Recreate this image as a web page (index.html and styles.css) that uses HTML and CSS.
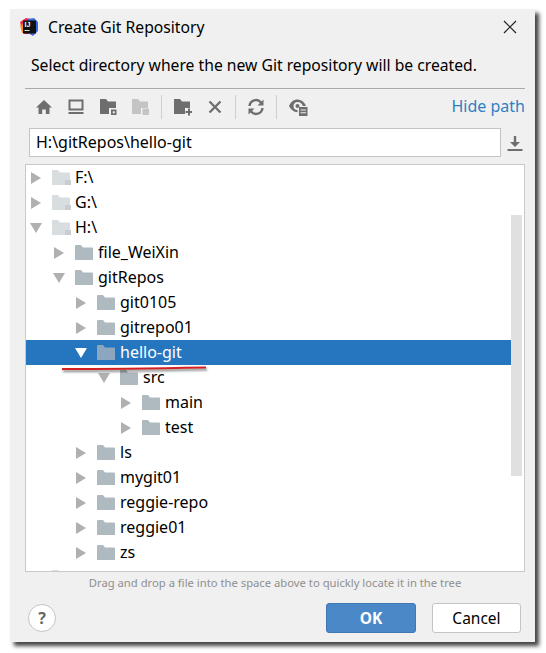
FILE: index.html
```html
<!DOCTYPE html>
<html lang="en">
<head>
<meta charset="utf-8">
<title>Create Git Repository</title>
<link rel="stylesheet" href="styles.css">
</head>
<body>
<svg width="0" height="0" class="defs">
  <defs>
    <symbol id="folder" viewBox="0 0 18 15"><path d="M0 1a1 1 0 0 1 1-1h5l2 2.500h9a1 1 0 0 1 1 1V15H0z"/></symbol>
  </defs>
</svg>
<main class="dialog">
  <header class="titlebar">
    <svg class="logo" width="20" height="20" viewBox="0 0 20 20">
      <path d="M1 5l6-4 5 1-2 15-5 0-2-5z" fill="#f2274f"/>
      <path d="M1 8l4-1 1 8-3 1z" fill="#f68b1f"/>
      <path d="M9 2l6-1 4 4 0 9-5 5-5-3z" fill="#3c6be0"/>
      <rect x="4" y="3.500" width="13" height="13" fill="#111"/>
      <text x="5.500" y="10" class="logo-text">IJ</text>
      <rect x="5.500" y="13" width="5" height="1" fill="#ddd"/>
    </svg>
    <span class="title">Create Git Repository</span>
    <svg class="close" width="14" height="14" viewBox="0 0 14 14"><path d="M1 1l12 12M13 1L1 13" stroke="#222" stroke-width="1.200" fill="none"/></svg>
  </header>
  <p class="prompt">Select directory where the new Git repository will be created.</p>
  <div class="panel">
    <div class="toolbar">
      <span class="tool"><svg width="18" height="18" viewBox="0 0 18 18"><path d="M9 2L1 9.500h2.500V16h3.700v-4.500h3.600V16h3.700V9.500H17z" fill="#6e6e6e"/></svg></span>
      <span class="tool"><svg width="18" height="18" viewBox="0 0 18 18"><path d="M2.500 2.500h13v9h-13z" fill="none" stroke="#6e6e6e" stroke-width="2"/><rect x="1.500" y="14" width="15" height="2" fill="#6e6e6e"/></svg></span>
      <span class="tool"><svg width="18" height="18" viewBox="0 0 18 18"><path d="M1 1h6l2 2.500h8V10h-7v6H1z" fill="#6e6e6e"/><path d="M12 11.500h5.500V17H12z" fill="#6e6e6e"/><rect x="13.800" y="13.300" width="2" height="2" fill="#f0f0f0"/></svg></span>
      <span class="tool"><svg width="18" height="18" viewBox="0 0 18 18"><path d="M1 1h6l2 2.500h8V10h-7v6H1z" fill="#c4c4c4"/><path d="M11.500 10.500H18V17h-6.500z" fill="#c4c4c4"/></svg></span>
      <span class="sep sep-wide"></span>
      <span class="tool"><svg width="18" height="18" viewBox="0 0 18 18"><path d="M0 1h6l2 2.500h8V10h-5v6H0z" fill="#6e6e6e"/><path d="M14 10.500h2V13h2.500v2H16v2.500h-2V15h-2.500v-2H14z" fill="#6e6e6e"/></svg></span>
      <span class="tool"><svg width="18" height="18" viewBox="0 0 18 18"><path d="M3.500 3.500l11 11M14.500 3.500l-11 11" stroke="#6e6e6e" stroke-width="2.300" fill="none"/></svg></span>
      <span class="sep"></span>
      <span class="tool"><svg width="18" height="18" viewBox="0 0 18 18"><path d="M2.500 8A6.500 6.500 0 0 1 14 4.500" fill="none" stroke="#6e6e6e" stroke-width="2.400"/><path d="M16.500 1.500V7.500H10.500z" fill="#6e6e6e"/><path d="M15.500 10A6.500 6.500 0 0 1 4 13.500" fill="none" stroke="#6e6e6e" stroke-width="2.400"/><path d="M1.500 16.500V10.500H7.500z" fill="#6e6e6e"/></svg></span>
      <span class="sep"></span>
      <span class="tool tool-after"><svg width="19" height="18" viewBox="0 0 19 18"><path d="M0 8C2 3.500 5 1.500 8.500 1.500S15 3.500 17 7.500L16 8h-2.200C13 5.500 11 4 8.500 4A4.300 4.300 0 0 0 4.500 8a4 4 0 0 0 4 4v2.200C4.500 14 2 11.500 0 8z" fill="#6e6e6e"/><circle cx="8.500" cy="8" r="2" fill="#6e6e6e"/><rect x="10" y="9" width="8.500" height="9" fill="#6e6e6e"/><path d="M11.500 12h5.500M11.500 14.800h5.500" stroke="#f0f0f0" stroke-width="1.100"/></svg></span>
      <a class="hide-path">Hide path</a>
    </div>
    <div class="path-row">
      <div class="path-field">H:\gitRepos\hello-git</div>
      <svg class="download" width="18" height="18" viewBox="0 0 18 18"><path d="M7.800 2h2.400v6H14l-5 5-5-5h3.800z" fill="#6e6e6e"/><rect x="1.500" y="15" width="15" height="2" fill="#6e6e6e"/></svg>
    </div>
    <div class="tree">
      <div class="row l0"><i class="arrow right"></i><svg class="folder drive"><use href="#folder"/></svg><span class="lock"></span><span class="label">F:\</span></div>
      <div class="row l0"><i class="arrow right"></i><svg class="folder drive"><use href="#folder"/></svg><span class="lock"></span><span class="label">G:\</span></div>
      <div class="row l0"><i class="arrow down"></i><svg class="folder drive"><use href="#folder"/></svg><span class="lock"></span><span class="label">H:\</span></div>
      <div class="row l1"><i class="arrow right"></i><svg class="folder"><use href="#folder"/></svg><span class="label">file_WeiXin</span></div>
      <div class="row l1"><i class="arrow down"></i><svg class="folder"><use href="#folder"/></svg><span class="label">gitRepos</span></div>
      <div class="row l2"><i class="arrow right"></i><svg class="folder"><use href="#folder"/></svg><span class="label">git0105</span></div>
      <div class="row l2"><i class="arrow right"></i><svg class="folder"><use href="#folder"/></svg><span class="label">gitrepo01</span></div>
      <div class="row l2 selected"><i class="arrow down"></i><svg class="folder"><use href="#folder"/></svg><span class="label">hello-git</span></div>
      <div class="row l3"><i class="arrow down"></i><svg class="folder"><use href="#folder"/></svg><span class="label">src</span></div>
      <div class="row l4"><i class="arrow right"></i><svg class="folder"><use href="#folder"/></svg><span class="label">main</span></div>
      <div class="row l4"><i class="arrow right"></i><svg class="folder"><use href="#folder"/></svg><span class="label">test</span></div>
      <div class="row l2"><i class="arrow right"></i><svg class="folder"><use href="#folder"/></svg><span class="label">ls</span></div>
      <div class="row l2"><i class="arrow right"></i><svg class="folder"><use href="#folder"/></svg><span class="label">mygit01</span></div>
      <div class="row l2"><i class="arrow right"></i><svg class="folder"><use href="#folder"/></svg><span class="label">reggie-repo</span></div>
      <div class="row l2"><i class="arrow right"></i><svg class="folder"><use href="#folder"/></svg><span class="label">reggie01</span></div>
      <div class="row l2"><i class="arrow right"></i><svg class="folder"><use href="#folder"/></svg><span class="label">zs</span></div>
      <div class="row l0"><i class="arrow right"></i><svg class="folder drive"><use href="#folder"/></svg><span class="lock"></span><span class="label">I:\</span></div>
      <div class="scrollbar"></div>
    </div>
    <p class="hint">Drag and drop a file into the space above to quickly locate it in the tree</p>
  </div>
  <footer class="footer">
    <span class="help">?</span>
    <button class="btn primary">OK</button>
    <button class="btn cancel">Cancel</button>
  </footer>
  <svg class="annotation" width="150" height="8" viewBox="0 0 150 8"><path class="anno-line" d="M1 3Q60 3 145 1.500"/></svg>
</main>
</body>
</html>
```
FILE: styles.css
```css
* { box-sizing: border-box; }
html, body { margin: 0; padding: 0; background: #fff; }
body { padding: 9px 0 0 10px; font-family: "Noto Sans", "Open Sans", sans-serif; color: #000; overflow: hidden; height: 653px; }
.defs { position: absolute; }
.dialog {
  position: relative;
  width: 525px;
  height: 633px;
  background: #f0f0f0;
  box-shadow: 4px 4px 4px #444;
  display: flex;
  flex-direction: column;
}
.titlebar { height: 38px; display: flex; align-items: center; padding: 0 18px 3px 9px; flex: none; }
.logo { flex: none; }
.logo-text { font: bold 7px "Liberation Sans", sans-serif; fill: #fff; }
.title { font-size: 15.7px; margin-left: 9px; }
.close { margin-left: auto; }
.prompt { margin: 0; padding-left: 21px; height: 41px; line-height: 37px; font-size: 15.7px; flex: none; }
.panel { margin: 0 10px 0 15px; flex: none; }
.toolbar { height: 40px; border-top: 1px solid #a9a9a9; display: flex; align-items: center; padding-left: 3px; padding-bottom: 4px; }
.tool { width: 32px; display: flex; justify-content: center; flex: none; }
.sep { width: 1px; height: 24px; background: #cfcfcf; margin: 0 4px; flex: none; }
.sep-wide { margin: 0 5px; }
.tool-after { margin-left: 1px; }
.hide-path { margin: 0 0 2px auto; color: #2f7fc4; font-size: 16px; }
.path-row { display: flex; align-items: center; padding-left: 4px; height: 29px; }
.path-field { width: 472px; height: 29px; background: #fff; border: 1px solid #c4c4c4; padding-left: 6px; line-height: 26px; font-size: 16px; flex: none; }
.download { margin-left: 5px; flex: none; }
.tree { position: relative; margin-top: 7px; height: 408px; background: #fff; border: 1px solid #c9c9c9; overflow: hidden; }
.row { height: 25px; display: flex; align-items: center; font-size: 16px; position: relative; }
.label { margin-bottom: 2px; }
.l0 { padding-left: 4px; }
.l1 { padding-left: 27px; }
.l2 { padding-left: 49px; }
.l3 { padding-left: 72px; }
.l4 { padding-left: 94px; }
.arrow { width: 12px; height: 12px; flex: none; position: relative; display: block; }
.arrow::before { content: ""; position: absolute; width: 0; height: 0; }
.arrow.right::before { left: 1px; top: 0; border-left: 10px solid #b0b0b0; border-top: 6px solid transparent; border-bottom: 6px solid transparent; }
.arrow.down::before { left: 0; top: 1px; border-top: 10px solid #b0b0b0; border-left: 6px solid transparent; border-right: 6px solid transparent; }
.folder { width: 18px; height: 15px; margin: 0 5px 0 10px; fill: #aeb9c0; flex: none; }
.folder.drive { fill: #d8dde0; }
.lock { position: absolute; left: 39px; top: 15px; width: 6px; height: 5px; background: #c7cdd1; }
.selected { background: #2675bf; color: #fff; }
.selected .arrow.down::before { border-top-color: #fff; }
.selected .folder { fill: #8ca6bf; }
.scrollbar { position: absolute; right: 0; top: 50px; width: 13px; height: 263px; background: #e0e0e0; border-right: 2px solid #fff; border-bottom: 2px solid #fff; }
.hint { margin: 2px 0 0; height: 18px; line-height: 18px; font-size: 11.25px; color: #8f8f8f; text-align: center; }
.footer { flex: none; display: flex; align-items: center; margin-top: 11px; padding: 0 14px 0 18px; }
.help { width: 28px; height: 28px; border-radius: 50%; background: #fff; border: 1px solid #c4c4c4; color: #666; font-weight: 700; font-size: 16px; display: flex; align-items: center; justify-content: center; }
.btn { height: 30px; border-radius: 3px; border: 1px solid #c4c4c4; background: #fff; font: 15.5px "Noto Sans", sans-serif; color: #000; padding: 0; }
.btn.cancel { width: 89px; margin-left: 16px; }
.btn.primary { width: 90px; margin-left: auto; background: #4a88c7; border-color: #3f78b4; color: #fff; font-weight: 700; }
.annotation { position: absolute; left: 51px; top: 357px; filter: drop-shadow(1px 2px 1px rgba(0, 0, 0, .5)); overflow: visible; }
.anno-line { stroke: #d42020; stroke-width: 2; fill: none; }
```
